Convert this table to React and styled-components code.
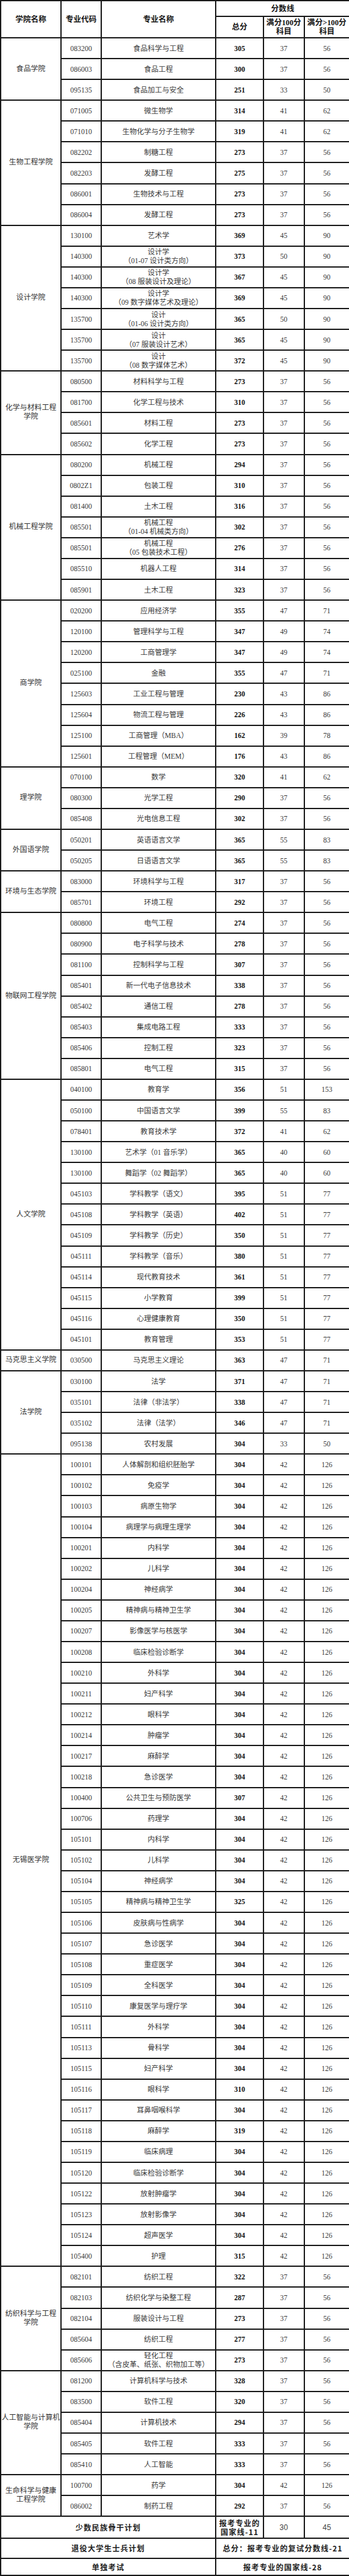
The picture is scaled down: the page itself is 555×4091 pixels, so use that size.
import styled, { createGlobalStyle, css } from 'styled-components';

const GlobalStyle = createGlobalStyle`
  html, body {
    margin: 0;
    padding: 0;
    background: #fff;
  }
`;

const line = css`
  border: 2px solid #1a1a1a;
  padding: 0;
  text-align: center;
  vertical-align: middle;
  line-height: 14px;
  white-space: nowrap;
`;

const Table = styled.table`
  width: 555px;
  table-layout: fixed;
  border-collapse: collapse;
  font-family: "Liberation Serif", "Noto Sans CJK SC", serif;
  font-size: 11.5px;
  color: #3a3a3a;
`;

const Row = styled.tr`
  height: ${({ $h }) => $h}px;
`;

const Head = styled.th`
  ${line};
  font-size: 12.3px;
  font-weight: 700;
  color: #151515;
`;

const Cell = styled.td`
  ${line};
`;

const College = styled.td`
  ${line};
  font-size: 11.6px;
  color: #333;
`;

const Total = styled.td`
  ${line};
  font-weight: 700;
  color: #151515;
`;

const Note = styled.td`
  ${line};
  font-family: "Noto Sans CJK SC", sans-serif;
  font-size: 12px;
  font-weight: 700;
  letter-spacing: 1px;
  color: #1e1e1e;
`;

const Plain = styled.td`
  ${line};
  font-family: "Liberation Sans", "Noto Sans CJK SC", sans-serif;
  font-size: 12px;
  color: #444;
`;

const med = (code, name, total = 304) => [code, name, total, 42, 126];
const eng = (code, name, total) => [code, name, total, 37, 56];

const groups = [
  {
    college: '食品学院',
    rows: [eng('083200', '食品科学与工程', 305), eng('086003', '食品工程', 300), ['095135', '食品加工与安全', 251, 33, 50]],
  },
  {
    college: '生物工程学院',
    rows: [
      ['071005', '微生物学', 314, 41, 62],
      ['071010', '生物化学与分子生物学', 319, 41, 62],
      eng('082202', '制糖工程', 273),
      eng('082203', '发酵工程', 275),
      eng('086001', '生物技术与工程', 273),
      eng('086004', '发酵工程', 273),
    ],
  },
  {
    college: '设计学院',
    rows: [
      ['130100', '艺术学', 369, 45, 90],
      ['140300', ['设计学', '（01-07 设计类方向）'], 373, 50, 90],
      ['140300', ['设计学', '（08 服装设计及理论）'], 367, 45, 90],
      ['140300', ['设计学', '（09 数字媒体艺术及理论）'], 369, 45, 90],
      ['135700', ['设计', '（01-06 设计类方向）'], 365, 50, 90],
      ['135700', ['设计', '（07 服装设计艺术）'], 365, 45, 90],
      ['135700', ['设计', '（08 数字媒体艺术）'], 372, 45, 90],
    ],
  },
  {
    college: ['化学与材料工程', '学院'],
    rows: [
      eng('080500', '材料科学与工程', 273),
      eng('081700', '化学工程与技术', 310),
      eng('085601', '材料工程', 273),
      eng('085602', '化学工程', 273),
    ],
  },
  {
    college: '机械工程学院',
    rows: [
      eng('080200', '机械工程', 294),
      eng('0802Z1', '包装工程', 310),
      eng('081400', '土木工程', 316),
      eng('085501', ['机械工程', '（01-04 机械类方向）'], 302),
      eng('085501', ['机械工程', '（05 包装技术工程）'], 276),
      eng('085510', '机器人工程', 314),
      eng('085901', '土木工程', 323),
    ],
  },
  {
    college: '商学院',
    rows: [
      ['020200', '应用经济学', 355, 47, 71],
      ['120100', '管理科学与工程', 347, 49, 74],
      ['120200', '工商管理学', 347, 49, 74],
      ['025100', '金融', 355, 47, 71],
      ['125603', '工业工程与管理', 230, 43, 86],
      ['125604', '物流工程与管理', 226, 43, 86],
      ['125100', '工商管理（MBA）', 162, 39, 78],
      ['125601', '工程管理（MEM）', 176, 43, 86],
    ],
  },
  {
    college: '理学院',
    rows: [['070100', '数学', 320, 41, 62], eng('080300', '光学工程', 290), eng('085408', '光电信息工程', 302)],
  },
  {
    college: '外国语学院',
    rows: [
      ['050201', '英语语言文学', 365, 55, 83],
      ['050205', '日语语言文学', 365, 55, 83],
    ],
  },
  {
    college: '环境与生态学院',
    rows: [eng('083000', '环境科学与工程', 317), eng('085701', '环境工程', 292)],
  },
  {
    college: '物联网工程学院',
    rows: [
      eng('080800', '电气工程', 274),
      eng('080900', '电子科学与技术', 278),
      eng('081100', '控制科学与工程', 307),
      eng('085401', '新一代电子信息技术', 338),
      eng('085402', '通信工程', 278),
      eng('085403', '集成电路工程', 333),
      eng('085406', '控制工程', 323),
      eng('085801', '电气工程', 315),
    ],
  },
  {
    college: '人文学院',
    rows: [
      ['040100', '教育学', 356, 51, 153],
      ['050100', '中国语言文学', 399, 55, 83],
      ['078401', '教育技术学', 372, 41, 62],
      ['130100', '艺术学（01 音乐学）', 365, 40, 60],
      ['130100', '舞蹈学（02 舞蹈学）', 365, 40, 60],
      ['045103', '学科教学（语文）', 395, 51, 77],
      ['045108', '学科教学（英语）', 402, 51, 77],
      ['045109', '学科教学（历史）', 350, 51, 77],
      ['045111', '学科教学（音乐）', 380, 51, 77],
      ['045114', '现代教育技术', 361, 51, 77],
      ['045115', '小学教育', 399, 51, 77],
      ['045116', '心理健康教育', 350, 51, 77],
      ['045101', '教育管理', 353, 51, 77],
    ],
  },
  {
    college: '马克思主义学院',
    rows: [['030500', '马克思主义理论', 363, 47, 71]],
  },
  {
    college: '法学院',
    rows: [
      ['030100', '法学', 371, 47, 71],
      ['035101', '法律（非法学）', 338, 47, 71],
      ['035102', '法律（法学）', 346, 47, 71],
      ['095138', '农村发展', 304, 33, 50],
    ],
  },
  {
    college: '无锡医学院',
    rows: [
      med('100101', '人体解剖和组织胚胎学'),
      med('100102', '免疫学'),
      med('100103', '病原生物学'),
      med('100104', '病理学与病理生理学'),
      med('100201', '内科学'),
      med('100202', '儿科学'),
      med('100204', '神经病学'),
      med('100205', '精神病与精神卫生学'),
      med('100207', '影像医学与核医学'),
      med('100208', '临床检验诊断学'),
      med('100210', '外科学'),
      med('100211', '妇产科学'),
      med('100212', '眼科学'),
      med('100214', '肿瘤学'),
      med('100217', '麻醉学'),
      med('100218', '急诊医学'),
      med('100400', '公共卫生与预防医学', 307),
      med('100706', '药理学'),
      med('105101', '内科学'),
      med('105102', '儿科学'),
      med('105104', '神经病学'),
      med('105105', '精神病与精神卫生学', 325),
      med('105106', '皮肤病与性病学'),
      med('105107', '急诊医学'),
      med('105108', '重症医学'),
      med('105109', '全科医学'),
      med('105110', '康复医学与理疗学'),
      med('105111', '外科学'),
      med('105113', '骨科学'),
      med('105115', '妇产科学'),
      med('105116', '眼科学', 310),
      med('105117', '耳鼻咽喉科学'),
      med('105118', '麻醉学', 319),
      med('105119', '临床病理'),
      med('105120', '临床检验诊断学'),
      med('105122', '放射肿瘤学'),
      med('105123', '放射影像学'),
      med('105124', '超声医学'),
      med('105400', '护理', 315),
    ],
  },
  {
    college: ['纺织科学与工程', '学院'],
    rows: [
      eng('082101', '纺织工程', 322),
      eng('082103', '纺织化学与染整工程', 287),
      eng('082104', '服装设计与工程', 273),
      eng('085604', '纺织工程', 277),
      eng('085606', ['轻化工程', '（含皮革、纸张、织物加工等）'], 273),
    ],
  },
  {
    college: ['人工智能与计算机', '学院'],
    rows: [
      eng('081200', '计算机科学与技术', 328),
      eng('083500', '软件工程', 320),
      eng('085404', '计算机技术', 294),
      eng('085405', '软件工程', 333),
      eng('085410', '人工智能', 333),
    ],
  },
  {
    college: ['生命科学与健康', '工程学院'],
    rows: [med('100700', '药学'), eng('086002', '制药工程', 292)],
  },
];

const Lines = ({ text }) =>
  Array.isArray(text) ? (
    <>
      {text[0]}
      <br />
      {text[1]}
    </>
  ) : (
    text
  );

const ROW_H = 33.08;

const App = () => (
  <>
    <GlobalStyle />
    <Table>
      <colgroup>
        <col style={{ width: 96 }} />
        <col style={{ width: 64 }} />
        <col style={{ width: 182 }} />
        <col style={{ width: 76 }} />
        <col style={{ width: 64.5 }} />
        <col style={{ width: 72.5 }} />
      </colgroup>
      <thead>
        <Row $h={25}>
          <Head rowSpan={2}>学院名称</Head>
          <Head rowSpan={2}>专业代码</Head>
          <Head rowSpan={2}>专业名称</Head>
          <Head colSpan={3}>分数线</Head>
        </Row>
        <Row $h={34}>
          <Head>总分</Head>
          <Head>
            满分100分
            <br />
            科目
          </Head>
          <Head>
            满分&gt;100分
            <br />
            科目
          </Head>
        </Row>
      </thead>
      <tbody>
        {groups.map((g) =>
          g.rows.map(([code, name, total, a, b], i) => (
            <Row $h={ROW_H} key={`${g.rows[0][0]}-${i}`}>
              {i === 0 && (
                <College rowSpan={g.rows.length}>
                  <Lines text={g.college} />
                </College>
              )}
              <Cell>{code}</Cell>
              <Cell>
                <Lines text={name} />
              </Cell>
              <Total>{total}</Total>
              <Cell>{a}</Cell>
              <Cell>{b}</Cell>
            </Row>
          ))
        )}
        <Row $h={34.7}>
          <Note colSpan={3}>少数民族骨干计划</Note>
          <Note>
            报考专业的
            <br />
            国家线-11
          </Note>
          <Plain>30</Plain>
          <Plain>45</Plain>
        </Row>
        <Row $h={32}>
          <Note colSpan={3}>退役大学生士兵计划</Note>
          <Note colSpan={3}>总分：报考专业的复试分数线-21</Note>
        </Row>
        <Row $h={27.3}>
          <Note colSpan={3}>单独考试</Note>
          <Note colSpan={3}>报考专业的国家线-28</Note>
        </Row>
      </tbody>
    </Table>
  </>
);

export default App;
